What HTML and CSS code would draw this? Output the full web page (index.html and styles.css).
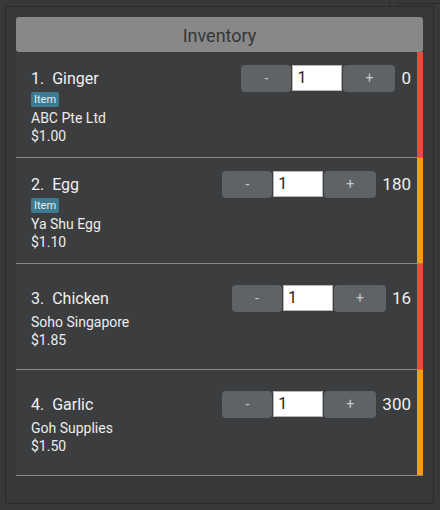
FILE: index.html
```html
<!DOCTYPE html>
<html>
<head>
<meta charset="utf-8">
<link rel="stylesheet" href="styles.css">
</head>
<body>
<div class="chrome">
  <div class="chrome-left"></div>
  <div class="chrome-right"></div>
</div>
<div class="frame">
  <div class="panel">
    <div class="header">Inventory</div>
    <div class="list">
      <div class="card">
        <div class="row">
          <div class="info">
            <div class="title">1.  Ginger</div>
            <span class="badge">Item</span>
            <div class="line supplier">ABC Pte Ltd</div>
            <div class="line">$1.00</div>
          </div>
          <div class="controls">
            <button class="btn">-</button><div class="input">1</div><button class="btn plus">+</button>
            <span class="qty">0</span>
          </div>
        </div>
        <div class="strip red"></div>
      </div>
      <div class="card">
        <div class="row">
          <div class="info">
            <div class="title">2.  Egg</div>
            <span class="badge">Item</span>
            <div class="line supplier">Ya Shu Egg</div>
            <div class="line">$1.10</div>
          </div>
          <div class="controls">
            <button class="btn">-</button><div class="input">1</div><button class="btn plus">+</button>
            <span class="qty">180</span>
          </div>
        </div>
        <div class="strip orange"></div>
      </div>
      <div class="card">
        <div class="row">
          <div class="info">
            <div class="title">3.  Chicken</div>
            <div class="line supplier">Soho Singapore</div>
            <div class="line">$1.85</div>
          </div>
          <div class="controls">
            <button class="btn">-</button><div class="input">1</div><button class="btn plus">+</button>
            <span class="qty">16</span>
          </div>
        </div>
        <div class="strip red"></div>
      </div>
      <div class="card">
        <div class="row">
          <div class="info">
            <div class="title">4.  Garlic</div>
            <div class="line supplier">Goh Supplies</div>
            <div class="line">$1.50</div>
          </div>
          <div class="controls">
            <button class="btn">-</button><div class="input">1</div><button class="btn plus">+</button>
            <span class="qty">300</span>
          </div>
        </div>
        <div class="strip orange"></div>
      </div>
    </div>
  </div>
</div>
</body>
</html>
```

FILE: styles.css
```css
* { box-sizing: border-box; }
html, body { margin: 0; padding: 0; }
body {
  width: 440px;
  height: 510px;
  background: #3b3b3b;
  font-family: Roboto, "Noto Sans", sans-serif;
  overflow: hidden;
}
.chrome {
  display: flex;
  height: 6px;
  background: #383838;
}
.chrome-left {
  width: 390px;
  height: 5px;
  border-right: 1px solid #2c2c2c;
}
.chrome-right {
  margin-left: 7px;
  flex: 1;
  height: 4px;
  border-left: 1px solid #2c2c2c;
  border-bottom: 1px solid #2c2c2c;
}
.frame {
  background: #383838;
  padding: 0 6px 6px 5px;
  height: 504px;
}
.panel {
  border: 1px solid #2b2b2b;
  height: 498px;
  padding: 10px;
  background: #383838;
}
.header {
  height: 35px;
  background: #888888;
  border-radius: 3px;
  color: #363636;
  font-size: 18px;
  display: flex;
  align-items: center;
  justify-content: center;
  padding-top: 1px;
}
.list {
  display: flex;
  flex-direction: column;
}
.card {
  display: flex;
  height: 106px;
  background: #3c3d3f;
  border-bottom: 1px solid #8a8a8a;
}
.row {
  flex: 1;
  display: flex;
  align-items: flex-start;
  align-self: center;
  padding: 0 6px 0 15px;
}
.info {
  flex: 1;
  display: flex;
  flex-direction: column;
  align-items: flex-start;
  padding-top: 4px;
  color: #ececec;
}
.title {
  font-size: 16px;
  line-height: 20px;
  white-space: pre;
  color: #f0f0f0;
}
.badge {
  margin-top: 3px;
  height: 15px;
  padding: 0 3px;
  background: #3d7b90;
  border-radius: 2px;
  color: #e6eef2;
  font-size: 11px;
  line-height: 15px;
}
.line {
  font-size: 14px;
  line-height: 18px;
}
.supplier { margin-top: 4px; }
.badge + .supplier { margin-top: 2px; }
.controls {
  display: flex;
  align-items: center;
  height: 27px;
}
.btn {
  width: 50px;
  height: 27px;
  margin: 0;
  border: none;
  border-radius: 4px;
  background: #5f6366;
  color: #c8c8c8;
  font-family: Roboto, sans-serif;
  font-size: 14px;
  padding: 0;
}
.btn.plus { width: 52px; }
.input {
  width: 50px;
  height: 26px;
  margin: 0 1px;
  background: #ffffff;
  border: 1px solid #b8b8b8;
  color: #1e1e1e;
  font-size: 16px;
  line-height: 24px;
  padding-left: 4px;
}
.qty {
  margin-left: 6px;
  color: #eeeeee;
  font-size: 17px;
}
.strip { width: 6px; }
.red { background: #e74c3c; }
.orange { background: #f39c12; }
```
